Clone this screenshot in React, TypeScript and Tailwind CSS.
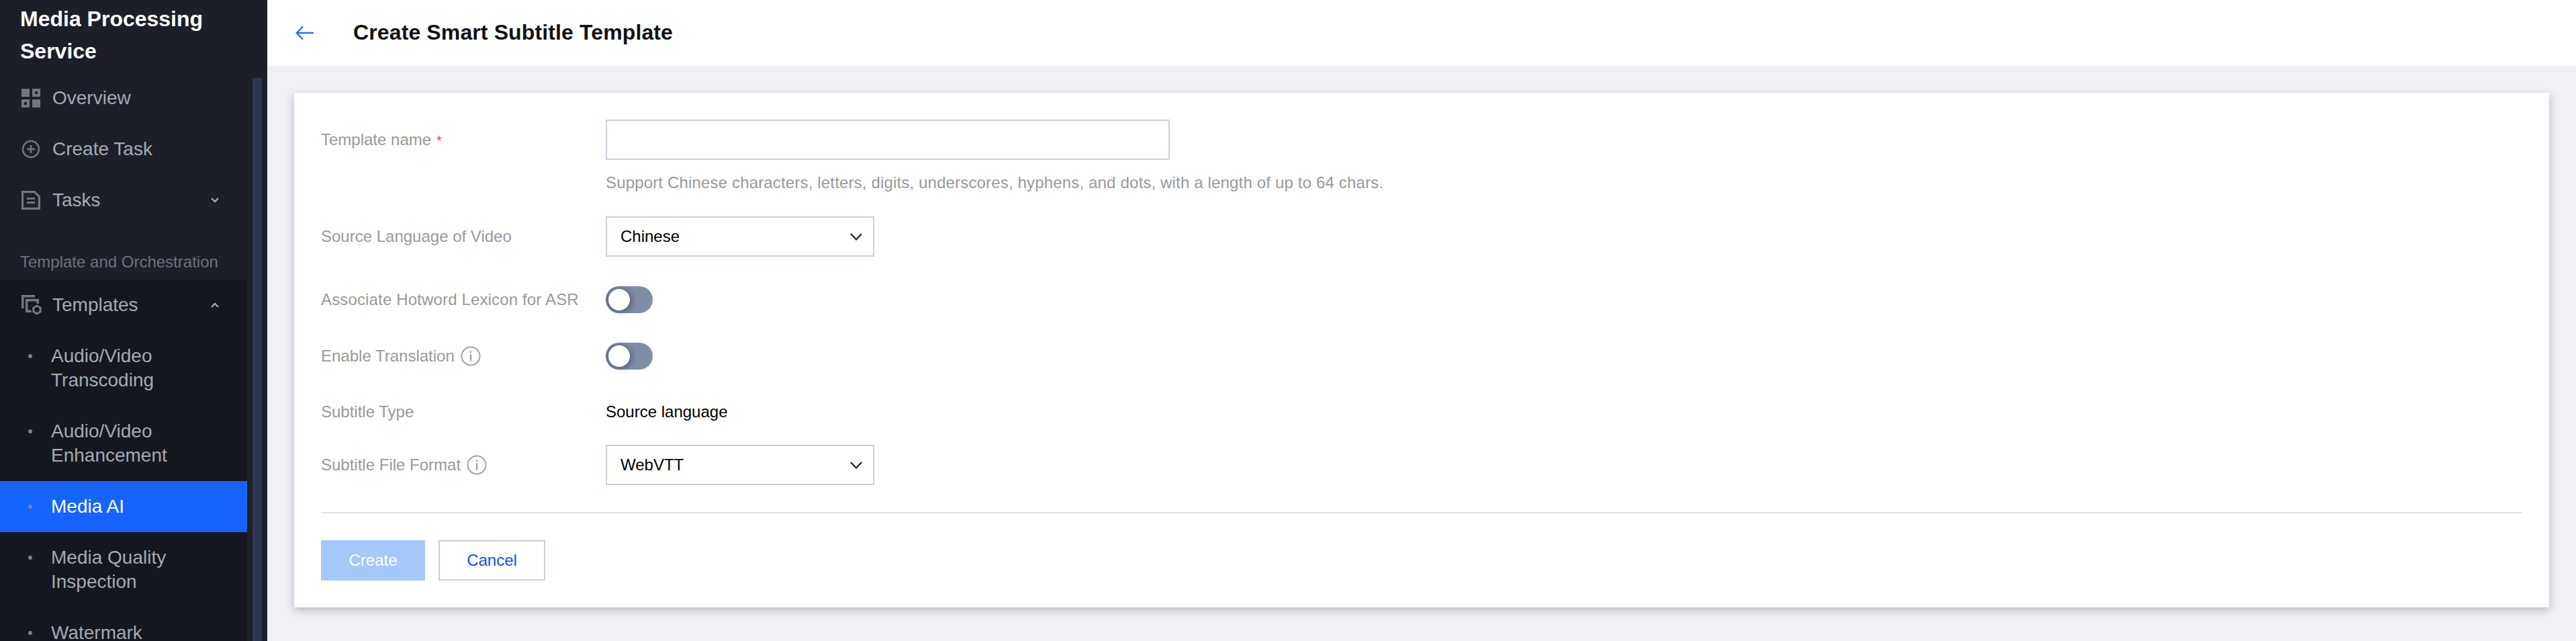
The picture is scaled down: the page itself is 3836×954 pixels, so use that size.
import React from "react";

const font = "font-['Liberation_Sans',Arial,sans-serif]";

function OverviewIcon() {
  return (
    <svg width="28" height="28" viewBox="0 0 28 28" className="shrink-0">
      <path fill="#6e7880" fillRule="evenodd" d="M0 0h12v12H0zM16 0h12v12H16zM20 4v4h4V4zM0 16h12v12H0zM4 20v4h4v-4zM16 16h12v12H16z" />
    </svg>
  );
}
function CreateIcon() {
  return (
    <svg width="28" height="28" viewBox="0 0 28 28" className="shrink-0">
      <circle cx="14" cy="14" r="12" fill="none" stroke="#6e7880" strokeWidth="2.500" />
      <path fill="#6e7880" d="M12.700 8h2.600v4.700H20v2.600h-4.700V20h-2.600v-4.700H8v-2.600h4.700z" />
    </svg>
  );
}
function TasksIcon() {
  return (
    <svg width="28" height="28" viewBox="0 0 28 28" className="shrink-0">
      <path fill="none" stroke="#6e7880" strokeWidth="3.200" d="M1.600 1.600h17.800l7 7v17.800H1.600z" />
      <path fill="#6e7880" d="M8 10h12v3H8zM8 16h12v3H8z" />
    </svg>
  );
}
function TemplatesIcon() {
  return (
    <svg width="31" height="31" viewBox="0 0 31 31" className="shrink-0">
      <path fill="#6e7880" d="M0 0h20v3.500H3.500V20H0z" />
      <path fill="#6e7880" d="M6 6h20v7h-3.500V9.500H9.500v13H15V26H6z" />
      <path fill="#6e7880" stroke="#14171e" strokeWidth="1.500" fillRule="evenodd" d="M23 13.500l7.500 4.300v8.400L23 30.500l-7.500-4.300v-8.400zM23 19a3 3 0 100 6 3 3 0 000-6z" />
    </svg>
  );
}
function Chevron({ up }: { up?: boolean }) {
  return (
    <svg width="12" height="8" viewBox="0 0 12 8" className="shrink-0">
      <path fill="none" stroke="#a4a9b0" strokeWidth="2.400" d={up ? "M1 7l5-5 5 5" : "M1 1l5 5 5-5"} />
    </svg>
  );
}
function NavRow({ icon, label, chevron }: { icon: React.ReactNode; label: string; chevron?: React.ReactNode }) {
  return (
    <div className="flex h-[76px] items-center pl-8 pr-[42px]">
      <div className="flex w-[46px] shrink-0 items-center">{icon}</div>
      <span className="flex-1 text-[28px] text-[#a5aab2]">{label}</span>
      {chevron}
    </div>
  );
}
function SubRow({ lines, active }: { lines: string[]; active?: boolean }) {
  return (
    <div className={`flex items-start py-5 pl-[42px] ${active ? "bg-[#1664ff]" : ""}`}>
      <span className={`mt-[15px] block h-[6px] w-[6px] shrink-0 rounded-full ${active ? "bg-[#7d8592]" : "bg-[#7b8087]"}`} />
      <span className={`ml-7 text-[28px] leading-[36px] ${active ? "text-white" : "text-[#a5aab2]"}`}>
        {lines.map((l) => (
          <span key={l} className="block whitespace-nowrap">{l}</span>
        ))}
      </span>
    </div>
  );
}
function Info() {
  return (
    <svg width="30" height="30" viewBox="0 0 30 30" className="ml-[9px] shrink-0">
      <circle cx="15" cy="15" r="13.500" fill="none" stroke="#a3a3a3" strokeWidth="2" />
      <path fill="#a3a3a3" d="M13.800 7.500h2.400V10h-2.400zM13.800 12.500h2.400v10h-2.400z" />
    </svg>
  );
}
function Label({ children, info, className = "" }: { children: React.ReactNode; info?: boolean; className?: string }) {
  return (
    <div className={`flex w-[424px] shrink-0 items-center text-[24px] text-[#999999] ${className}`}>
      <span className="whitespace-nowrap">{children}</span>
      {info && <Info />}
    </div>
  );
}
function SelectBox({ value }: { value: string }) {
  return (
    <div className="flex h-[60px] w-[400px] items-center justify-between border-2 border-[#c9cfdc] pl-5 pr-4">
      <span className="text-[24px] text-black">{value}</span>
      <svg width="18" height="11" viewBox="0 0 18 11">
        <path fill="none" stroke="#222222" strokeWidth="2.200" d="M1 1l8 8.500L17 1" />
      </svg>
    </div>
  );
}
function Toggle() {
  return (
    <div className="flex h-10 w-[70px] items-center rounded-full bg-linear-to-r from-[#66758d] to-[#7f8ea6] to-50% pl-1">
      <div className="h-8 w-8 rounded-full bg-white shadow-[4px_2px_8px_rgba(40,50,70,0.45)]" />
    </div>
  );
}

export default function App() {
  return (
    <div className={`flex h-[954px] w-[3836px] overflow-hidden bg-[#f0f1f5] ${font}`}>
      <aside className="flex h-full w-[398px] shrink-0 flex-col bg-[#1c1f28]">
        <div className="h-[108px] shrink-0 pl-[30px] pt-1 text-[32px] font-bold leading-[48px] text-white">
          <div>Media Processing</div>
          <div>Service</div>
        </div>
        <div className="flex min-h-0 flex-1">
          <nav className="w-[368px] shrink-0">
            <NavRow icon={<OverviewIcon />} label="Overview" />
            <NavRow icon={<CreateIcon />} label="Create Task" />
            <NavRow icon={<TasksIcon />} label="Tasks" chevron={<Chevron />} />
            <div className="h-[80px] pl-[30px] pt-9 text-[24px] leading-[36px] text-[#6d727a]">Template and Orchestration</div>
            <div className="bg-[#14171e] pb-10">
              <NavRow icon={<TemplatesIcon />} label="Templates" chevron={<Chevron up />} />
              <SubRow lines={["Audio/Video", "Transcoding"]} />
              <SubRow lines={["Audio/Video", "Enhancement"]} />
              <SubRow lines={["Media AI"]} active />
              <SubRow lines={["Media Quality", "Inspection"]} />
              <SubRow lines={["Watermark"]} />
            </div>
          </nav>
          <div className="ml-2 mt-2 w-[14px] shrink-0 bg-[#2d374d]" />
        </div>
      </aside>
      <main className="flex min-w-0 flex-1 flex-col">
        <header className="flex h-[98px] shrink-0 items-center bg-white pl-[42px]">
          <svg width="28" height="22" viewBox="0 0 28 22" className="shrink-0">
            <path fill="none" stroke="#2f6fed" strokeWidth="2.400" d="M27 11H2M11 1.500L1.800 11l9.200 9.500" />
          </svg>
          <h1 className="mb-[3px] ml-[58px] text-[32px] font-bold tracking-[0.12px] text-[#111111]">Create Smart Subtitle Template</h1>
        </header>
        <div className="mx-10 mt-10 bg-white p-10 shadow-[0_4px_12px_rgba(54,58,80,0.32)]">
          <div className="flex items-center">
            <Label>
              Template name<span className="ml-2 text-[20px] text-[#e54545]">*</span>
            </Label>
            <div className="h-[60px] w-[840px] border-2 border-[#c9cfdc]" />
          </div>
          <div className="mt-4 pl-[424px] text-[24px] leading-[36px] tracking-[0.16px] text-[#999999]">
            Support Chinese characters, letters, digits, underscores, hyphens, and dots, with a length of up to 64 chars.
          </div>
          <div className="mt-8 flex items-center">
            <Label>Source Language of Video</Label>
            <SelectBox value="Chinese" />
          </div>
          <div className="mt-11 flex items-center">
            <Label className="tracking-[0.15px]">Associate Hotword Lexicon for ASR</Label>
            <Toggle />
          </div>
          <div className="mt-11 flex items-center">
            <Label info>Enable Translation</Label>
            <Toggle />
          </div>
          <div className="mt-[45px] flex h-9 items-center">
            <Label>Subtitle Type</Label>
            <span className="text-[24px] text-black">Source language</span>
          </div>
          <div className="mt-[31px] flex items-center">
            <Label info>Subtitle File Format</Label>
            <SelectBox value="WebVTT" />
          </div>
          <div className="mt-10 h-[2px] bg-[#e2e5ea]" />
          <div className="mt-10 flex gap-5">
            <div className="flex h-[60px] w-[155px] items-center justify-center bg-[#a5c8fb] text-[24px] text-white">Create</div>
            <div className="flex h-[60px] w-[159px] items-center justify-center border-2 border-[#c9cfdc] text-[24px] text-[#0052ff]">Cancel</div>
          </div>
        </div>
      </main>
    </div>
  );
}
